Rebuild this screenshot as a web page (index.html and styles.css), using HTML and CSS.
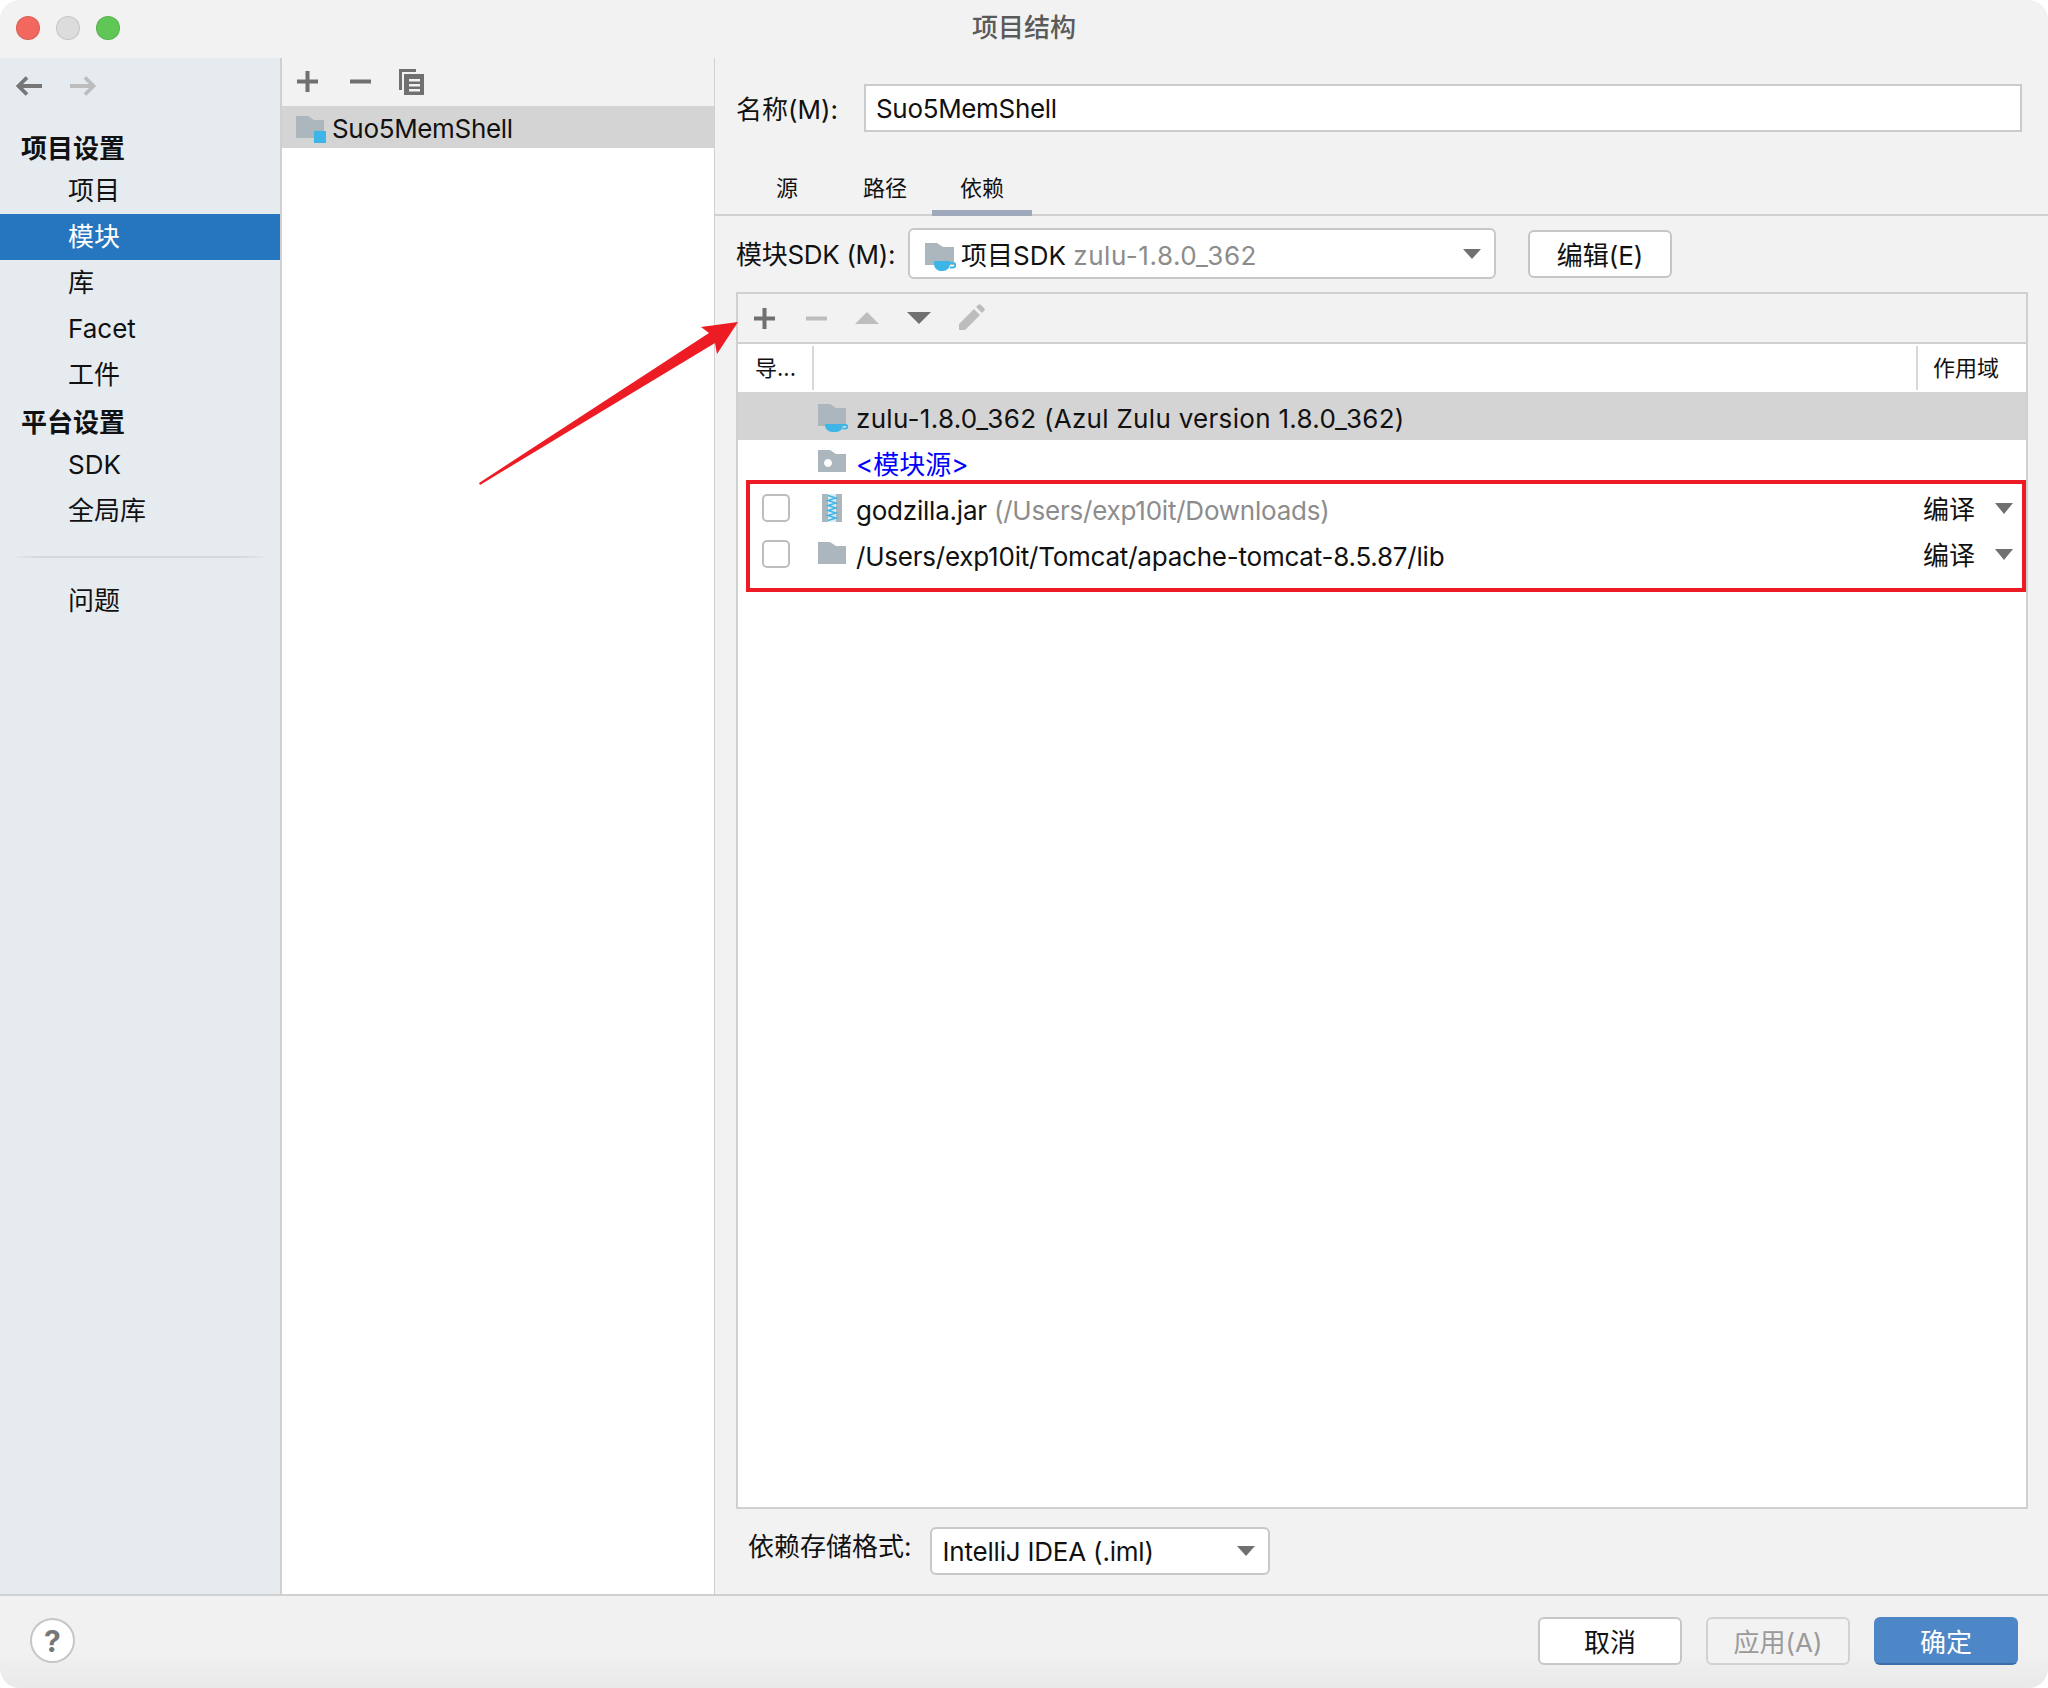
FILE: index.html
```html
<!DOCTYPE html>
<html lang="zh-CN">
<head>
<meta charset="utf-8">
<title>项目结构</title>
<link rel="stylesheet" href="styles.css">
</head>
<body>
<div class="window">
  <header class="titlebar">
    <div class="lights"><span class="light red"></span><span class="light gray"></span><span class="light green"></span></div>
    <div class="title">项目结构</div>
  </header>
  <main class="body">
    <aside class="sidebar">
      <div class="nav-arrows">
        <svg class="ico-arrow" viewBox="0 0 26 20"><path d="M26 10H4M11 1.500 2.500 10l8.500 8.500" fill="none" stroke="#777" stroke-width="3.800"/></svg>
        <svg class="ico-arrow" viewBox="0 0 26 20"><path d="M0 10h22M15 1.500 23.500 10 15 18.500" fill="none" stroke="#bdbdbd" stroke-width="3.800"/></svg>
      </div>
      <div class="side-head">项目设置</div>
      <div class="side-item">项目</div>
      <div class="side-item active">模块</div>
      <div class="side-item">库</div>
      <div class="side-item">Facet</div>
      <div class="side-item">工件</div>
      <div class="side-head second">平台设置</div>
      <div class="side-item">SDK</div>
      <div class="side-item">全局库</div>
      <div class="side-divider"></div>
      <div class="side-item">问题</div>
    </aside>
    <section class="modules">
      <div class="mod-toolbar">
        <svg class="ico-20" viewBox="0 0 20 20"><path d="M10 0v20M0 10h20" stroke="#707070" stroke-width="3.800"/></svg>
        <svg class="ico-20" viewBox="0 0 20 20"><path d="M0 10h20" stroke="#707070" stroke-width="3.800"/></svg>
        <svg class="ico-copy" viewBox="0 0 25 26"><path d="M0 0h17v3H3v18H0z" fill="#707070"/><path fill-rule="evenodd" d="M5 5h20v21H5zM10 10v2.500h11V10zM10 15v2.500h11V15zM10 20v2.500h11V20z" fill="#707070"/></svg>
      </div>
      <div class="mod-list">
        <div class="mod-row">
          <svg class="ico-mod" viewBox="0 0 30 27"><path d="M0 0h12l6 4h10v18H0z" fill="#acb6bd"/><rect x="18" y="15" width="12" height="12" fill="#3db5e6"/></svg>
          <span class="tight-name">Suo5MemShell</span>
        </div>
      </div>
    </section>
    <section class="detail">
      <div class="name-line">
        <label class="lbl name-lbl">名称(M):</label>
        <div class="name-input"><span class="tight-name">Suo5MemShell</span></div>
      </div>
      <nav class="tabs">
        <span class="tab tab-src">源</span>
        <span class="tab tab-path">路径</span>
        <span class="tab tab-dep">依赖</span>
      </nav>
      <div class="sdk-line">
        <label class="lbl sdk-lbl">模块SDK (M):</label>
        <div class="combo sdk-combo">
          <svg class="ico-sdk" viewBox="0 0 31 28"><path d="M0 0h12l6 4h11v18H0z" fill="#acb6bd"/><path d="M9 18h16v3a7 7 0 0 1-7 7h-2a7 7 0 0 1-7-7z" fill="#3db5e6"/><path d="M25 20h3a2 2 0 0 1 0 4.500h-3" fill="none" stroke="#3db5e6" stroke-width="2"/></svg>
          <span class="combo-text">项目SDK <span class="muted spaced">zulu-1.8.0_362</span></span>
          <svg class="tri-combo" viewBox="0 0 18 10"><path d="M0 0h18L9 10z" fill="#707070"/></svg>
        </div>
        <button class="btn edit-btn">编辑(E)</button>
      </div>
      <div class="deps">
        <div class="dep-toolbar">
          <svg class="ico-20" viewBox="0 0 20 20"><path d="M10 0v20M0 10h20" stroke="#707070" stroke-width="3.800"/></svg>
          <svg class="ico-20" viewBox="0 0 20 20"><path d="M0 10h20" stroke="#bdbdbd" stroke-width="3.800"/></svg>
          <svg class="tri-tool" viewBox="0 0 24 12"><path d="M12 0l12 12H0z" fill="#bdbdbd"/></svg>
          <svg class="tri-tool" viewBox="0 0 24 12"><path d="M0 0h24L12 12z" fill="#707070"/></svg>
          <svg class="ico-pencil" viewBox="0 0 26 26"><path d="M0 26v-6L15 5l6 6L6 26zM17 3l2-2a2 2 0 0 1 3 0l3 3a2 2 0 0 1 0 3l-2 2z" fill="#bdbdbd"/></svg>
        </div>
        <div class="dep-head">
          <div class="col-export">导...</div>
          <div class="col-main"></div>
          <div class="col-scope">作用域</div>
        </div>
        <div class="dep-row selected">
          <div class="cell-check"></div>
          <svg class="ico-dep low" viewBox="0 0 30 28"><path d="M0 0h12l6 4h10v18H0z" fill="#acb6bd"/><path d="M7 20h18v1a7 7 0 0 1-7 7h-4a7 7 0 0 1-7-7z" fill="#3db5e6"/><path d="M25 21h2.500a1.800 1.800 0 0 1 0 3.600h-3" fill="none" stroke="#3db5e6" stroke-width="1.800"/></svg>
          <span class="dep-text wide">zulu-1.8.0_362 (Azul Zulu version 1.8.0_362)</span>
        </div>
        <div class="dep-row">
          <div class="cell-check"></div>
          <svg class="ico-dep" viewBox="0 0 30 28"><path fill-rule="evenodd" d="M0 0h12l6 4h10v18H0zM10 9a4 4 0 1 0 .01 0z" fill="#acb6bd"/></svg>
          <span class="dep-text link">&lt;模块源&gt;</span>
        </div>
        <div class="dep-row">
          <div class="cell-check"><span class="checkbox"></span></div>
          <svg class="ico-dep jar" viewBox="0 0 30 28"><rect x="4" width="20" height="28" fill="#acb6bd"/><rect x="10" width="8" height="28" fill="#dcecf4"/><path d="M10 1.500l8 2.500-8 2.500 8 2.500-8 2.500 8 2.500-8 2.500 8 2.500-8 2.500 8 2.500-8 2.500" fill="none" stroke="#3db5e6" stroke-width="1.500"/></svg>
          <span class="dep-text narrow">godzilla.jar <span class="muted">(/Users/exp10it/Downloads)</span></span>
          <span class="scope">编译</span>
          <svg class="tri-scope" viewBox="0 0 18 11"><path d="M0 0h18L9 11z" fill="#707070"/></svg>
        </div>
        <div class="dep-row">
          <div class="cell-check"><span class="checkbox"></span></div>
          <svg class="ico-dep" viewBox="0 0 30 28"><path d="M0 0h12l6 4h10v18H0z" fill="#acb6bd"/></svg>
          <span class="dep-text narrow">/Users/exp10it/Tomcat/apache-tomcat-8.5.87/lib</span>
          <span class="scope">编译</span>
          <svg class="tri-scope" viewBox="0 0 18 11"><path d="M0 0h18L9 11z" fill="#707070"/></svg>
        </div>
      </div>
      <div class="format-line">
        <label class="lbl format-lbl">依赖存储格式:</label>
        <div class="combo format-combo">
          <span class="combo-text narrow-iml">IntelliJ IDEA (.iml)</span>
          <svg class="tri-combo" viewBox="0 0 18 10"><path d="M0 0h18L9 10z" fill="#707070"/></svg>
        </div>
      </div>
    </section>
  </main>
  <footer class="footer">
    <span class="help">?</span>
    <div class="footer-btns">
      <button class="btn">取消</button>
      <button class="btn disabled">应用(A)</button>
      <button class="btn primary">确定</button>
    </div>
  </footer>
</div>
<div class="red-box"></div>
<svg class="red-arrow" viewBox="0 0 290 200"><path d="M9 183 L239 33 L231 27 L268 22 L247 54 L245 43 L10 185z" fill="#ed1c24"/></svg>
</body>
</html>
```
FILE: styles.css
```css
* { box-sizing: border-box; }
html, body { margin: 0; padding: 0; height: 100%; background: #fff; }
body {
  width: 2048px; height: 1688px; position: relative; overflow: hidden;
  font-family: Inter, "Noto Sans CJK SC", "Noto Sans", sans-serif;
  font-size: 26px; color: #111;
}
.window {
  width: 2048px; height: 1688px; border-radius: 20px; overflow: hidden;
  display: grid; grid-template-rows: 58px 1fr 94px; background: #f2f2f2;
}
.titlebar { position: relative; display: flex; align-items: center; justify-content: center; padding-bottom: 7px; background: #f2f2f2; }
.lights { position: absolute; left: 16px; top: 16px; display: flex; gap: 16px; }
.light { width: 24px; height: 24px; border-radius: 50%; border: 1px solid rgba(0,0,0,.1); }
.light.red { background: #f2685e; }
.light.gray { background: #dcdcdc; }
.light.green { background: #60c655; }
.title { font-size: 26px; font-weight: 500; color: #5a5a5a; }

.body { display: grid; grid-template-columns: 282px 433px 1fr; min-height: 0; }
.sidebar { background: #e6ebf0; border-right: 2px solid #d0d0d0; }
.nav-arrows { height: 68px; padding: 18px 0 0 16px; display: flex; gap: 28px; }
.ico-arrow { width: 26px; height: 20px; }
.side-head { height: 42px; padding-left: 21px; font-weight: 700; line-height: 46px; }
.side-head.second { margin-top: 2px; }
.side-item { height: 46px; line-height: 46px; padding-left: 68px; }
.side-item.active { background: #2675bf; color: #fff; }
.side-divider { height: 2px; margin: 22px 12px 20px; background: linear-gradient(90deg, transparent, #d8d8d8 10%, #d8d8d8 90%, transparent); }

.modules { background: #fff; border-right: 1px solid #d0d0d0; display: flex; flex-direction: column; }
.mod-toolbar { height: 48px; background: #f2f2f2; display: flex; align-items: center; padding: 0 0 1px 15px; gap: 32px; }
.ico-20 { width: 21px; height: 21px; flex: none; }
.ico-copy { width: 25px; height: 26px; margin-left: -4px; }
.mod-list { flex: 1; }
.mod-row { height: 42px; background: #d4d4d4; display: flex; align-items: center; padding-left: 14px; gap: 6px; }
.mod-row .tight-name { margin-top: 2px; }
.ico-mod { width: 30px; height: 27px; margin-top: 5px; }
.tight-name { letter-spacing: -0.33px; }

.detail { padding: 26px 20px 0 21px; display: flex; flex-direction: column; min-width: 0; }
.lbl { white-space: nowrap; }
.name-line { display: flex; align-items: center; height: 48px; padding-right: 6px; }
.name-lbl { width: 128px; flex: none; margin-top: -2px; }
.name-input {
  flex: 1; height: 48px; background: #fff; border: 2px solid #cbcbcb; line-height: 46px; padding-left: 10px;
}
.tabs { height: 84px; margin: 0 -20px 0 -21px; border-bottom: 2px solid #d0d0d0; display: flex; align-items: flex-end; font-size: 22px; }
.tab { display: block; height: 56px; line-height: 60px; text-align: center; }
.tab-src { margin-left: 50px; width: 44px; }
.tab-path { margin-left: 36px; width: 80px; }
.tab-dep { width: 100px; margin-left: 7px; border-bottom: 6px solid #9ea9bb; margin-bottom: -2px; height: 58px; }
.sdk-line { display: flex; align-items: center; margin-top: 12px; height: 51px; }
.sdk-lbl { width: 172px; flex: none; letter-spacing: -0.3px; margin-top: -2px; }
.combo {
  background: #fff; border: 2px solid #c8c8c8; border-radius: 6px; display: flex; align-items: center; position: relative;
}
.sdk-combo { width: 588px; height: 51px; padding-left: 15px; gap: 5px; }
.ico-sdk { width: 31px; height: 28px; margin-top: 6px; }
.muted { color: #8c8c8c; }
.spaced { letter-spacing: 0.55px; }
.tri-combo { position: absolute; right: 13px; top: 50%; width: 18px; height: 10px; margin-top: -5px; }
.btn {
  font: inherit; color: #111; background: #fff; border: 2px solid #c6c6c6; border-radius: 6px;
  width: 144px; height: 48px; padding: 0; display: flex; align-items: center; justify-content: center;
}
.edit-btn { margin-left: 32px; }
.deps { height: 1217px; margin-top: 13px; background: #fff; border: 2px solid #d0d0d0; }
.dep-toolbar { height: 50px; background: #f2f2f2; border-bottom: 2px solid #d0d0d0; display: flex; align-items: center; padding-left: 16px; gap: 31px; }
.tri-tool { width: 24px; height: 12px; flex: none; margin-left: -3px; }
.ico-pencil { width: 26px; height: 26px; margin: -2px 0 0 -3px; flex: none; }
.dep-head { height: 48px; display: flex; align-items: center; font-size: 22px; }
.col-export { width: 76px; height: 44px; line-height: 44px; padding-left: 17px; border-right: 2px solid #d8d8d8; }
.col-main { flex: 1; }
.col-scope { width: 110px; height: 44px; line-height: 44px; padding-left: 15px; border-left: 2px solid #d8d8d8; }
.dep-row { height: 46px; display: flex; align-items: center; position: relative; }
.dep-row.selected { background: #d4d4d4; height: 48px; }
.cell-check { width: 80px; flex: none; padding-left: 24px; display: flex; align-items: center; }
.checkbox { width: 28px; height: 28px; background: #fff; border: 2px solid #bdbdbd; border-radius: 5px; margin-top: -2px; }
.ico-dep { width: 30px; height: 28px; flex: none; margin-top: 2px; }
.ico-dep.low { margin-top: 4px; }
.ico-dep.jar { margin-top: -2px; }
.dep-text { margin-left: 8px; margin-top: 4px; flex: 1; white-space: nowrap; }
.wide { letter-spacing: 0.3px; }
.narrow { letter-spacing: -0.22px; margin-top: 2px; }
.narrow-iml { letter-spacing: -0.2px; }
.link { color: #0000ff; margin-top: -2px; }
.scope { width: 52px; margin-right: 51px; margin-top: -4px; }
.tri-scope { position: absolute; right: 13px; top: 17px; width: 18px; height: 11px; }

.format-line { display: flex; align-items: center; margin-top: 18px; padding-left: 12px; }
.format-lbl { margin-top: -13px; }
.format-combo { width: 340px; height: 48px; margin-left: 18px; padding-left: 11px; }

.footer {
  border-top: 2px solid #d0d0d0; display: flex; align-items: center; justify-content: space-between;
  padding: 0 30px 3px 30px; background: linear-gradient(#f1f1f1, #f1f1f1 60%, #e9e9e9);
}
.help {
  width: 45px; height: 45px; border-radius: 50%; background: #fff; border: 2px solid #c6c6c6;
  display: flex; align-items: center; justify-content: center; font-size: 30px; font-weight: 700; color: #777;
}
.footer-btns { display: flex; gap: 24px; }
.btn.disabled { background: #f2f2f2; color: #9a9a9a; border-color: #d2d2d2; }
.btn.primary { background: #4d87c7; color: #fff; border-color: #4d87c7; border-bottom-color: #3b6ea8; }

.red-box { position: absolute; left: 746px; top: 480px; width: 1280px; height: 112px; border: 4px solid #ed1c24; }
.red-arrow { position: absolute; left: 470px; top: 300px; width: 290px; height: 200px; }
```
